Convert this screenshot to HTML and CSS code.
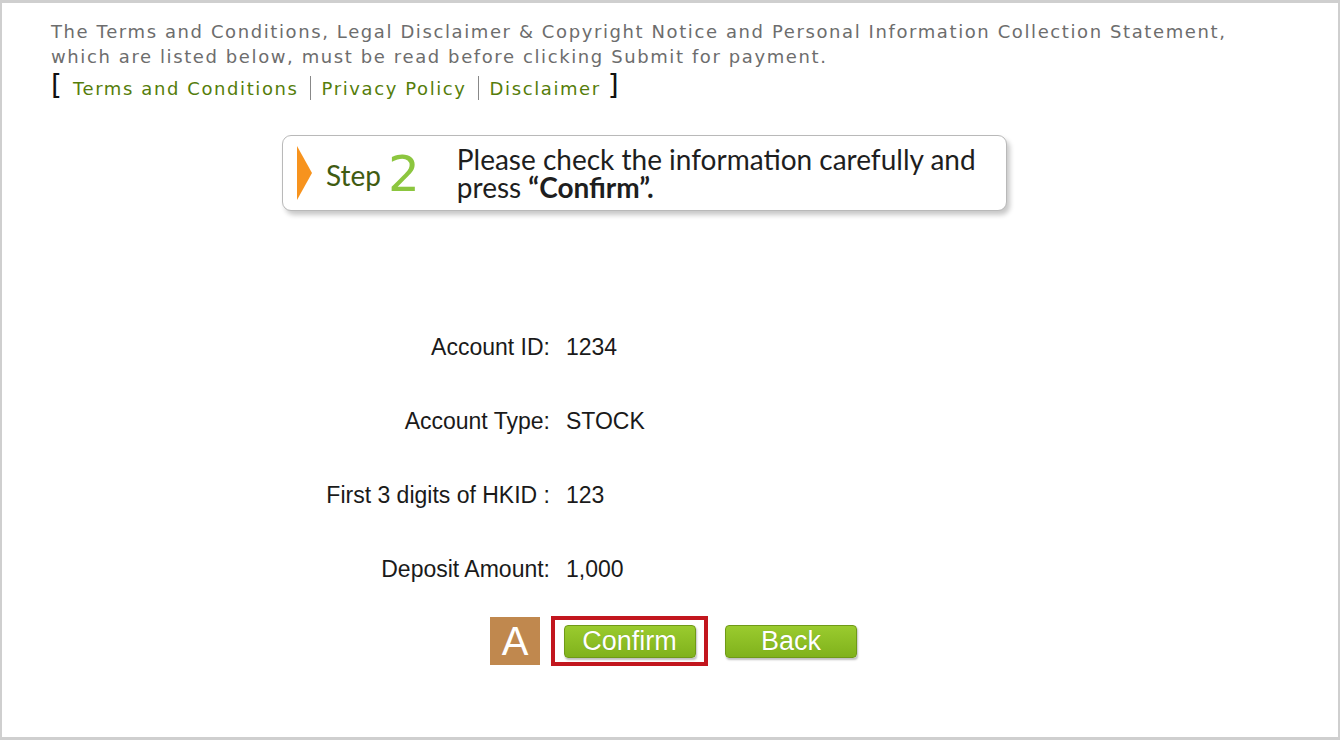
FILE: index.html
```html
<!DOCTYPE html>
<html lang="en">
<head>
  <meta charset="UTF-8" />
  <title>Payment - Step 2</title>
  <link rel="stylesheet" href="styles.css">
</head>
<body>
  <div class="page">
    <p class="notice">The Terms and Conditions, Legal Disclaimer &amp; Copyright Notice and Personal Information Collection Statement, which are listed below, must be read before clicking Submit for payment.</p>
    <div class="links">
      <span class="bracket">[</span>
      <a href="#">Terms and Conditions</a>
      <span class="sep"></span>
      <a href="#">Privacy Policy</a>
      <span class="sep"></span>
      <a href="#">Disclaimer</a>
      <span class="bracket">]</span>
    </div>

    <div class="step-box">
      <span class="arrow"></span>
      <span class="step-label">Step</span>
      <span class="step-num">2</span>
      <p class="step-text">Please check the information carefully and press <b>“Confirm”.</b></p>
    </div>

    <div class="details">
      <div class="label">Account ID:</div>
      <div class="value">1234</div>
      <div class="label">Account Type:</div>
      <div class="value">STOCK</div>
      <div class="label">First 3 digits of HKID :</div>
      <div class="value">123</div>
      <div class="label">Deposit Amount:</div>
      <div class="value">1,000</div>
    </div>

    <div class="actions">
      <span class="badge">A</span>
      <span class="highlight"><button class="btn">Confirm</button></span>
      <button class="btn">Back</button>
    </div>
  </div>
</body>
</html>
```

FILE: styles.css
```css
html, body {
  margin: 0;
  padding: 0;
  background: #fff;
}
.page {
  box-sizing: border-box;
  width: 1340px;
  height: 740px;
  border: 2px solid #cfcfcf;
  border-top-width: 3px;
  border-bottom-width: 3px;
  padding: 16px 0 0 49px;
  display: flex;
  flex-direction: column;
  align-items: flex-start;
}
.notice {
  margin: 0;
  width: 1200px;
  font-family: "DejaVu Sans", Verdana, sans-serif;
  font-size: 18px;
  letter-spacing: 1.6px;
  line-height: 25px;
  color: #6d6d6d;
}
.links {
  display: flex;
  align-items: center;
  gap: 11px;
  height: 34px;
  margin-top: 2px;
  font-family: "DejaVu Sans", Verdana, sans-serif;
  font-size: 18px;
  letter-spacing: 1.6px;
}
.links a {
  color: #557d0a;
  text-decoration: none;
}
.bracket {
  font-size: 28px;
  color: #111;
  line-height: 1;
  letter-spacing: 0;
  margin: -4px 0 0;
}
.links .bracket:last-child {
  margin-left: -4px;
}
.sep {
  width: 1px;
  height: 24px;
  background: #888;
}
.step-box {
  box-sizing: border-box;
  display: flex;
  align-items: center;
  width: 725px;
  height: 76px;
  margin: 30px 0 0 231px;
  padding-left: 14px;
  border: 1px solid #b9b9b9;
  border-radius: 9px;
  box-shadow: 3px 4px 5px rgba(0, 0, 0, 0.22);
  background: #fff;
}
.arrow {
  width: 0;
  height: 0;
  border-top: 27px solid transparent;
  border-bottom: 27px solid transparent;
  border-left: 15px solid #f7931e;
}
.step-label {
  margin-left: 14px;
  font-family: Lato, "Open Sans", sans-serif;
  font-size: 28px;
  color: #3f5b12;
  padding-top: 4px;
}
.step-num {
  margin-left: 7px;
  font-family: "DejaVu Sans", sans-serif;
  font-size: 50px;
  line-height: 1;
  color: #8cc63f;
  padding-top: 2px;
}
.step-text {
  margin: 0 0 0 37px;
  font-family: Lato, "Open Sans", sans-serif;
  font-size: 28px;
  line-height: 28px;
  color: #1e1e1e;
  width: 545px;
}
.step-text b {
  display: inline-block;
  font-weight: 700;
  line-height: 26px;
}
.details {
  display: grid;
  grid-template-columns: 499px auto;
  column-gap: 16px;
  margin-top: 99px;
  font-family: "Liberation Sans", Arial, sans-serif;
  font-size: 23px;
  line-height: 74px;
  color: #1a1a1a;
}
.label {
  text-align: right;
}
.actions {
  display: flex;
  align-items: center;
  margin: 10px 0 0 439px;
}
.badge {
  width: 50px;
  height: 48px;
  background: #c0884e;
  color: #fff;
  font-family: "Liberation Sans", Arial, sans-serif;
  font-size: 40px;
  line-height: 48px;
  text-align: center;
}
.highlight {
  box-sizing: border-box;
  display: flex;
  align-items: center;
  justify-content: center;
  width: 157px;
  height: 50px;
  margin-left: 11px;
  border: 4px solid #c2161e;
  background: #fff;
}
.btn {
  box-sizing: border-box;
  width: 132px;
  height: 33px;
  padding: 0;
  border: 1px solid #6f9a17;
  border-radius: 4px;
  background: linear-gradient(#9acb2e, #80b21c);
  box-shadow: 1px 2px 2px rgba(0, 0, 0, 0.25);
  color: #fff;
  font-family: "Liberation Sans", Arial, sans-serif;
  font-size: 27px;
  line-height: 31px;
  text-shadow: 0 0 1px rgba(0, 0, 0, 0.2);
  cursor: pointer;
}
.actions > .btn {
  margin-left: 17px;
}
```
